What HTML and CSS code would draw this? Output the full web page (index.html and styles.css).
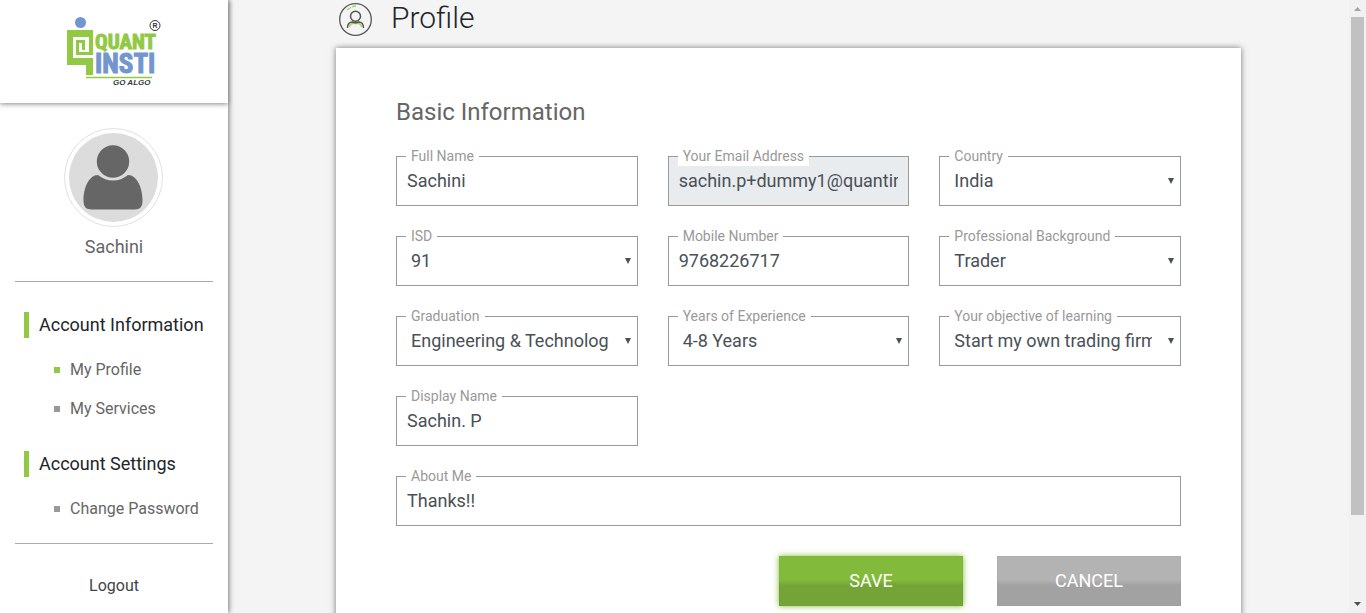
FILE: index.html
```html
<!DOCTYPE html>
<html lang="en">
<head>
<meta charset="utf-8">
<meta name="viewport" content="width=device-width, initial-scale=1">
<title>Profile</title>
<link rel="stylesheet" href="styles.css">
</head>
<body class="page">
<aside class="sidebar">
  <a class="brand" href="#" aria-label="QuantInsti">
    <svg class="logo" width="98" height="74" viewBox="0 0 98 74" aria-hidden="true">
      <circle cx="15.500" cy="7.500" r="5.500" fill="#7196d0"/>
      <path fill="#92c944" fill-rule="evenodd" d="M2 15h26v25H11V25h9v10h-3v-7h-3v9h10V22H8v21h20v17h-7V50H2z"/>
      <text class="logo-quant" x="30" y="34">QUANT</text>
      <text class="logo-insti" x="30" y="58">INSTI</text>
      <path d="M21 62.500h66" stroke="#92c944" stroke-width="1.500"/>
      <text class="logo-tag" x="48" y="70">GO ALGO</text>
      <circle cx="90" cy="10.500" r="5" fill="none" stroke="#333" stroke-width="1"/>
      <text class="logo-mark" x="87.500" y="13">R</text>
    </svg>
  </a>
  <div class="user">
    <svg class="avatar" width="100" height="100" viewBox="0 0 100 100" aria-hidden="true">
      <circle cx="49.500" cy="49.500" r="49" fill="#fff" stroke="#dfe1e6"/>
      <circle cx="49.500" cy="49.500" r="44.500" fill="#dcdcdc"/>
      <circle cx="49" cy="33.500" r="16.200" fill="#666"/>
      <path d="M34 47C25 47 19.500 60 19.500 72v1.500q0 8 8 8h43q8 0 8-8v-1.500C78.500 60 73 47 64 47q-7 5.500-15 5.500t-15-5.500z" fill="#666"/>
    </svg>
    <span class="user-name">Sachini</span>
  </div>
  <nav class="menu">
    <h2 class="menu-title">Account Information</h2>
    <ul class="menu-list">
      <li class="menu-item menu-item-active"><a href="#">My Profile</a></li>
      <li class="menu-item"><a href="#">My Services</a></li>
    </ul>
    <h2 class="menu-title">Account Settings</h2>
    <ul class="menu-list">
      <li class="menu-item"><a href="#">Change Password</a></li>
    </ul>
  </nav>
  <a class="logout" href="#">Logout</a>
</aside>

<main class="content">
  <header class="page-head">
    <svg width="34" height="34" viewBox="0 0 34 34" fill="none" aria-hidden="true">
      <circle cx="16.500" cy="17.500" r="15.800" stroke="#555" stroke-width="1.300"/>
      <path d="M8 8q4-3.500 9-4" stroke="#a5d65b" stroke-width="1.300" stroke-dasharray="5 1"/>
      <path d="M10.500 25q.5-3.500 3.500-3.500h5q3 0 3.500 3.500" stroke="#a5d65b" stroke-width="1.500"/>
      <circle cx="16.500" cy="14.300" r="5" stroke="#555" stroke-width="1.500"/>
      <path d="M8.500 26c0-4 2-6 5-6q3 1.500 6 0c3 0 5 2 5 6" stroke="#555" stroke-width="1.400"/>
    </svg>
    <h1 class="page-title">Profile</h1>
  </header>

  <form class="card">
    <h2 class="card-title">Basic Information</h2>
    <div class="fields">
      <div class="field">
        <label class="label" for="name">Full Name</label>
        <input class="control" id="name" type="text" value="Sachini">
      </div>
      <div class="field">
        <label class="label" for="email">Your Email Address</label>
        <input class="control" id="email" type="text" value="sachin.p+dummy1@quantinsti.com" disabled>
      </div>
      <div class="field">
        <label class="label" for="country">Country</label>
        <select class="control select" id="country"><option>India</option></select>
        <svg class="arrow" width="6" height="6" viewBox="0 0 6 6" aria-hidden="true"><path d="M0 0h6L3 6z"/></svg>
      </div>
      <div class="field">
        <label class="label" for="isd">ISD</label>
        <select class="control select" id="isd"><option>91</option></select>
        <svg class="arrow" width="6" height="6" viewBox="0 0 6 6" aria-hidden="true"><path d="M0 0h6L3 6z"/></svg>
      </div>
      <div class="field">
        <label class="label" for="mobile">Mobile Number</label>
        <input class="control" id="mobile" type="tel" value="9768226717">
      </div>
      <div class="field">
        <label class="label" for="background">Professional Background</label>
        <select class="control select" id="background"><option>Trader</option></select>
        <svg class="arrow" width="6" height="6" viewBox="0 0 6 6" aria-hidden="true"><path d="M0 0h6L3 6z"/></svg>
      </div>
      <div class="field">
        <label class="label" for="graduation">Graduation</label>
        <select class="control select" id="graduation"><option>Engineering &amp; Technology</option></select>
        <svg class="arrow" width="6" height="6" viewBox="0 0 6 6" aria-hidden="true"><path d="M0 0h6L3 6z"/></svg>
      </div>
      <div class="field">
        <label class="label" for="experience">Years of Experience</label>
        <select class="control select" id="experience"><option>4-8 Years</option></select>
        <svg class="arrow" width="6" height="6" viewBox="0 0 6 6" aria-hidden="true"><path d="M0 0h6L3 6z"/></svg>
      </div>
      <div class="field">
        <label class="label" for="objective">Your objective of learning</label>
        <select class="control select" id="objective"><option>Start my own trading firm</option></select>
        <svg class="arrow" width="6" height="6" viewBox="0 0 6 6" aria-hidden="true"><path d="M0 0h6L3 6z"/></svg>
      </div>
      <div class="field">
        <label class="label" for="display">Display Name</label>
        <input class="control" id="display" type="text" value="Sachin. P">
      </div>
      <div class="field field-wide">
        <label class="label" for="about">About Me</label>
        <input class="control" id="about" type="text" value="Thanks!!">
      </div>
    </div>
    <div class="actions">
      <button class="button button-save" type="submit">SAVE</button>
      <button class="button button-cancel" type="button">CANCEL</button>
    </div>
  </form>
</main>

<div class="scrollbar" aria-hidden="true">
  <svg class="scroll-arrow" width="7" height="4" viewBox="0 0 7 4"><path d="M0 4L3.500 0 7 4z" fill="#a3a3a3"/></svg>
  <div class="scroll-thumb"></div>
  <div class="scroll-space"></div>
  <svg class="scroll-arrow" width="7" height="4" viewBox="0 0 7 4"><path d="M0 0L3.500 4 7 0z" fill="#505050"/></svg>
</div>
</body>
</html>
```
FILE: styles.css
```css
* { box-sizing: border-box; }

.page {
  margin: 0;
  height: 100vh;
  display: flex;
  overflow: hidden;
  background: #f4f4f4;
  color: #212529;
  font-family: Roboto, "Liberation Sans", sans-serif;
  font-size: 16px;
}

a { color: inherit; text-decoration: none; }

.sidebar {
  flex: 0 0 228px;
  display: flex;
  flex-direction: column;
  background: #fff;
  box-shadow: 1px 0 5px #777;
}

.brand {
  display: flex;
  padding: 15px 65px 14px;
  box-shadow: 0 1px 5px #888;
}

.logo-quant, .logo-insti {
  font-family: "Roboto Condensed", Roboto, "Liberation Sans", sans-serif;
  font-weight: 700;
}
.logo-quant { font-size: 21px; fill: #92c944; stroke: #92c944; }
.logo-insti { font-size: 27px; fill: #7196d0; stroke: #7196d0; }
.logo-tag { font: italic 700 8px "Liberation Sans", sans-serif; fill: #333c40; }
.logo-mark { font: 700 7px "Liberation Sans", sans-serif; fill: #333; }

.user {
  display: flex;
  flex-direction: column;
  align-items: center;
  margin: 0 15px;
  padding: 25px 0 23px;
  border-bottom: 1px solid #b3a6a6;
}
.user-name {
  margin-top: 8px;
  font-size: 18px;
  line-height: 22px;
  color: #666;
}

.menu {
  margin: 0 15px;
  padding: 30px 0 15px 9px;
  border-bottom: 1px solid #b3a6a6;
}
.menu-title {
  margin: 0;
  padding-left: 10px;
  border-left: 5px solid #92c944;
  font-size: 18px;
  font-weight: 400;
  line-height: 26px;
  white-space: nowrap;
}
.menu-list {
  margin: 0;
  padding: 12px 0 23px 30px;
  list-style: none;
}
.menu-list:last-child { padding-bottom: 0; }
.menu-item {
  display: flex;
  align-items: center;
  gap: 10px;
  line-height: 39px;
  color: #666;
  white-space: nowrap;
}
.menu-item::before {
  content: "";
  width: 6px;
  height: 6px;
  background: #999;
}
.menu-item-active::before { background: #92c944; }

.logout {
  align-self: center;
  margin-top: 30px;
  line-height: 24px;
  color: #444;
}

.content {
  flex: 1;
  min-width: 0;
  padding: 0 108px;
}
.page-head {
  display: flex;
  align-items: center;
  gap: 18px;
  height: 48px;
  padding: 0 3px 10px;
}
.page-title {
  margin: 0;
  padding-bottom: 2px;
  font-size: 30px;
  font-weight: 300;
  line-height: 36px;
}

.card {
  padding: 48px 60px 60px;
  background: #fff;
  box-shadow: 0 0 6px #777;
}
.card-title {
  margin: 0 0 28px;
  font-size: 24px;
  font-weight: 400;
  line-height: 32px;
  color: #666;
}
.fields {
  display: grid;
  grid-template-columns: repeat(3, minmax(0, 1fr));
  gap: 30px;
}
.field { position: relative; display: flex; }
.field-wide { grid-column: 1 / -1; }
.label {
  position: absolute;
  top: -10px;
  left: 10px;
  padding: 0 5px;
  background: #fff;
  font-size: 14px;
  line-height: 20px;
  color: #999;
}
.control {
  width: 100%;
  height: 50px;
  margin: 0;
  padding: 0 10px 2px;
  border: 1px solid #999;
  border-radius: 0;
  background: #fff;
  color: #495057;
  font-family: inherit;
  font-size: 18px;
}
.control:disabled { background: #e9ecef; }
.select { appearance: none; padding: 0 28px 2px 14px; }
.arrow {
  position: absolute;
  top: 22px;
  right: 7px;
  fill: #495057;
  pointer-events: none;
}

.actions {
  display: flex;
  justify-content: flex-end;
  gap: 34px;
  margin-top: 30px;
}
.button {
  width: 184px;
  height: 50px;
  padding: 0 0 2px;
  border: 0;
  color: #fff;
  font-family: inherit;
  font-size: 18px;
}
.button-save {
  background: linear-gradient(#82bb3b 48%, #74a436 58%);
  box-shadow: 0 0 6px #82bb3b, inset 0 0 1px #5f8d28;
}
.button-cancel {
  background: linear-gradient(#b3b3b3 48%, #a2a2a2 58%);
  box-shadow: inset 0 0 1px #888;
}

.scrollbar {
  flex: 0 0 17px;
  display: flex;
  flex-direction: column;
  align-items: center;
  padding: 7px 0;
  background: #f1f1f1;
}
.scroll-arrow { flex: none; }
.scroll-thumb {
  flex: 498;
  width: 13px;
  margin-top: 6px;
  background: #c1c1c1;
}
.scroll-space { flex: 87; }
```
